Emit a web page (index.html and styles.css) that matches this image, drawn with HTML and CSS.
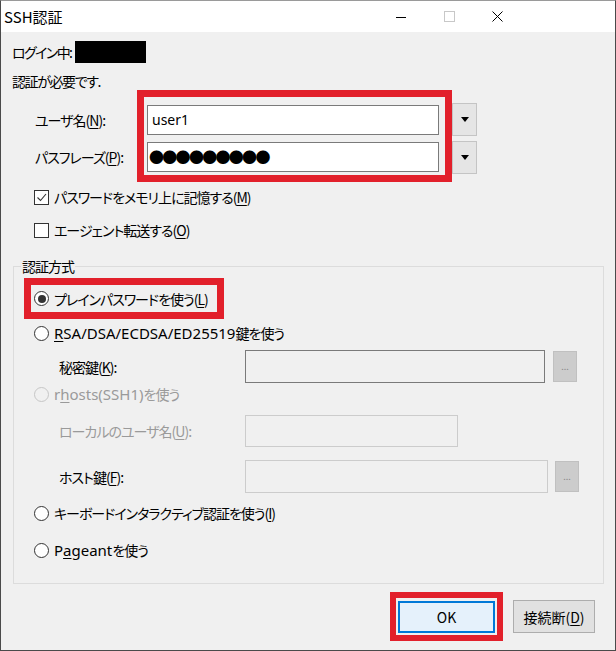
FILE: index.html
```html
<!DOCTYPE html>
<html lang="ja">

<head>
    <meta charset="UTF-8">
    <meta name="viewport" content="width=device-width, initial-scale=1.0">
    <title>SSH認証</title>

    <link rel="stylesheet" href="styles.css">
</head>

<body>
    <div class="window">
        <header class="titlebar">
            <span class="title">SSH認証</span>
            <div class="caption">
                <span class="cap-btn">
                    <svg width="10" height="10" viewBox="0 0 10 10"><path d="M0 5.5h10" stroke="#000" stroke-width="1" /></svg>
                </span>
                <span class="cap-btn">
                    <svg width="11" height="11" viewBox="0 0 11 11"><rect x="0.5" y="0.5" width="10" height="10" fill="none" stroke="#c8c8c8" /></svg>
                </span>
                <span class="cap-btn">
                    <svg width="11" height="11" viewBox="0 0 11 11"><path d="M0.5 0.5l10 10M10.5 0.5l-10 10" stroke="#000" stroke-width="1" /></svg>
                </span>
            </div>
        </header>

        <main class="content">
            <div class="login-row">
                <span class="login-text">ログイン中:</span>
                <span class="redacted"></span>
            </div>
            <div class="notice">認証が必要です.</div>

            <div class="creds">
                <div class="cred-labels">
                    <label>ユーザ名(<u>N</u>):</label>
                    <label>パスフレーズ(<u>P</u>):</label>
                </div>
                <div class="mark cred-fields">
                    <div class="field">user1</div>
                    <div class="field dots">●●●●●●●●●</div>
                </div>
                <div class="drops">
                    <span class="drop"></span>
                    <span class="drop"></span>
                </div>
            </div>

            <div class="checks">
                <div class="check-row">
                    <span class="box">
                        <svg width="11" height="11" viewBox="0 0 11 11"><path d="M1.5 5.5l3 3 5.5-6.5" fill="none" stroke="#333" stroke-width="1.1" /></svg>
                    </span>
                    <span>パスワードをメモリ上に記憶する(<u>M</u>)</span>
                </div>
                <div class="check-row">
                    <span class="box"></span>
                    <span>エージェント転送する(<u>O</u>)</span>
                </div>
            </div>

            <fieldset class="method">
                <legend>認証方式</legend>
                <div class="method-body">
                    <div class="mark plain-mark">
                        <div class="opt"><span class="radio on"></span><span>プレインパスワードを使う(<u>L</u>)</span></div>
                    </div>
                    <div class="opt rsa"><span class="radio"></span><span><span class="lat"><u>R</u>SA/DSA/ECDSA/ED25519</span>鍵を使う</span></div>
                    <div class="sub key-row">
                        <span class="sub-label">秘密鍵(<u>K</u>):</span>
                        <span class="slot slot-dark"></span>
                        <span class="more">...</span>
                    </div>
                    <div class="opt off rhosts"><span class="radio"></span><span><span class="lat">r<u>h</u>osts(SSH1)</span>を使う</span></div>
                    <div class="sub local-row">
                        <span class="sub-label off">ローカルのユーザ名(<u>U</u>):</span>
                        <span class="slot slot-local"></span>
                    </div>
                    <div class="sub host-row">
                        <span class="sub-label">ホスト鍵(<u>F</u>):</span>
                        <span class="slot slot-host"></span>
                        <span class="more">...</span>
                    </div>
                    <div class="opt kbd"><span class="radio"></span><span>キーボードインタラクティブ認証を使う(<u>I</u>)</span></div>
                    <div class="opt pageant"><span class="radio"></span><span><span class="lat">P<u>a</u>geant</span>を使う</span></div>
                </div>
            </fieldset>

            <div class="actions">
                <div class="mark ok-mark">
                    <button class="btn btn-ok">OK</button>
                </div>
                <button class="btn">接続断(<u>D</u>)</button>
            </div>
        </main>
    </div>
</body>

</html>
```

FILE: styles.css
```css
* {
    box-sizing: border-box;
}

body {
    margin: 0;
    background: #fff;
    font-family: "Noto Sans CJK JP", sans-serif;
    font-size: 14px;
    letter-spacing: -1px;
    color: #000;
    font-feature-settings: "palt";
}

u {
    text-underline-offset: 2px;
}

.lat {
    font-family: "Noto Sans", "Noto Sans CJK JP", sans-serif;
    font-size: 15px;
    letter-spacing: 0;
}

.window {
    width: 616px;
    height: 651px;
    border: 1px solid #4a4a4a;
    border-top-color: #9a9a9a;
    background: #f0f0f0;
    display: flex;
    flex-direction: column;
}

.titlebar {
    height: 31px;
    flex: none;
    background: #fff;
    display: flex;
    align-items: center;
    padding-left: 3px;
}

.title {
    font-size: 15px;
    letter-spacing: 0;
}

.caption {
    margin-left: auto;
    margin-right: 94px;
    display: flex;
}

.cap-btn {
    width: 48px;
    height: 31px;
    display: flex;
    align-items: center;
    justify-content: center;
}

.cap-btn svg {
    display: block;
}

.content {
    padding-left: 11px;
}

.login-row {
    margin-top: 9px;
    height: 22px;
    display: flex;
    align-items: center;
}

.login-text {
    letter-spacing: -1.6px;
}

.redacted {
    width: 71px;
    height: 22px;
    background: #000;
    margin-left: 4px;
}

.notice {
    margin-top: 9px;
    height: 18px;
    line-height: 18px;
    letter-spacing: -1.4px;
}

/* red highlight frames */
.mark {
    border: 7px solid #e2202b;
}

.creds {
    display: flex;
    padding-left: 23px;
}

.cred-labels {
    width: 102px;
    padding-top: 15px;
    display: flex;
    flex-direction: column;
    gap: 7px;
}

.cred-labels label {
    height: 30px;
    line-height: 30px;
}

.cred-fields {
    width: 315px;
    padding: 8px 6px 3px 3px;
    display: flex;
    flex-direction: column;
    gap: 7px;
}

.field {
    height: 30px;
    border: 1px solid #7a7a7a;
    background: #fff;
    padding-left: 4px;
    line-height: 27px;
    font-family: "Noto Sans", sans-serif;
    font-size: 14px;
    letter-spacing: 0;
}

.field.dots {
    font-family: "Noto Sans CJK JP", sans-serif;
    font-size: 15px;
    letter-spacing: -1.7px;
    padding-left: 1px;
    line-height: 28px;
}

.drops {
    padding-top: 13px;
    display: flex;
    flex-direction: column;
    gap: 5px;
}

.drop {
    width: 25px;
    height: 33px;
    background: #e5e5e5;
    border: 1px solid #c4c4c4;
    display: flex;
    align-items: center;
    justify-content: center;
}

.drop::after {
    content: "";
    border-left: 4.5px solid transparent;
    border-right: 4.5px solid transparent;
    border-top: 5px solid #000;
}

.checks {
    margin-top: 2px;
    padding-left: 22px;
    display: flex;
    flex-direction: column;
    gap: 7px;
}

.check-row {
    height: 26px;
    display: flex;
    align-items: center;
    gap: 5px;
}

.box {
    width: 15px;
    height: 15px;
    border: 1px solid #333;
    background: #fff;
    display: flex;
    align-items: center;
    justify-content: center;
}

.box svg {
    display: block;
}

.method {
    margin: 14px 0 0 1px;
    width: 591px;
    border: 1px solid #dcdcdc;
    padding: 3px 0 22px 0;
    min-width: 0;
}

.method legend {
    margin-left: 7px;
    padding: 0 1px;
    line-height: 18px;
}

.method-body {
    padding-left: 10px;
}

.opt {
    height: 22px;
    display: flex;
    align-items: center;
    gap: 5px;
    padding-left: 10px;
}

.opt.off {
    color: #9a9a9a;
}

.radio {
    width: 15px;
    height: 15px;
    border: 1px solid #333;
    border-radius: 50%;
    background: #fff;
    display: flex;
    align-items: center;
    justify-content: center;
}

.radio.on::after {
    content: "";
    width: 8px;
    height: 8px;
    border-radius: 50%;
    background: #333;
}

.opt.off .radio {
    border-color: #c6c6c6;
    background: #f0f0f0;
}

.plain-mark {
    width: 200px;
}

.plain-mark .opt {
    height: 27px;
    padding-left: 3px;
}

.opt.rsa {
    margin-top: 1px;
    height: 26px;
}

.sub {
    display: flex;
    align-items: center;
    padding-left: 35px;
}

.sub-label {
    width: 186px;
}

.sub-label.off {
    color: #9a9a9a;
}

.slot {
    height: 33px;
    border: 1px solid #cccccc;
    background: #f0f0f0;
}

.slot-dark {
    width: 300px;
    border-color: #7a7a7a;
}

.slot-local {
    width: 213px;
    height: 32px;
}

.slot-host {
    width: 303px;
}

.more {
    width: 24px;
    height: 31px;
    margin-left: 8px;
    background: #cccccc;
    border: 1px solid #c0c0c0;
    color: #8a8a8a;
    font-size: 9px;
    letter-spacing: 0;
    line-height: 1;
    display: flex;
    align-items: flex-end;
    justify-content: center;
    padding-bottom: 10px;
}

.key-row {
    margin-top: 4px;
    height: 33px;
}

.local-row {
    margin-top: 10px;
    height: 32px;
}

.host-row {
    margin-top: 13px;
    height: 33px;
}

.host-row .more {
    margin-left: 7px;
}

.opt.kbd {
    margin-top: 9px;
}

.opt.pageant {
    margin-top: 15px;
}

.actions {
    margin-top: 8px;
    display: flex;
    justify-content: flex-end;
    align-items: center;
    gap: 10px;
    padding-right: 20px;
}

.ok-mark {
    border-width: 6px;
    padding: 3px 2px 2px 2px;
}

.btn {
    width: 82px;
    height: 33px;
    border: 1px solid #adadad;
    background: #e1e1e1;
    font-family: inherit;
    font-size: 14px;
    letter-spacing: 0;
    font-feature-settings: "palt";
    color: #000;
    padding: 0;
}

.btn-ok {
    display: block;
    width: 97px;
    height: 32px;
    border: 2px solid #0078d7;
    background: #e5f1fb;
}
```
